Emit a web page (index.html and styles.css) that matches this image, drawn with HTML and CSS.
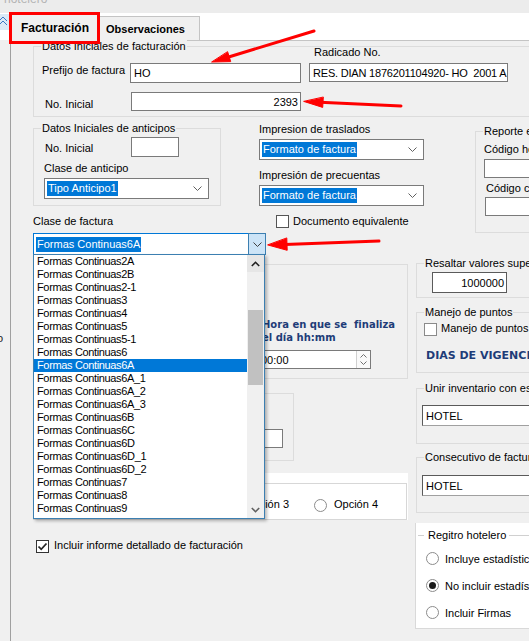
FILE: index.html
```html
<!DOCTYPE html>
<html lang="es">
<head>
<meta charset="utf-8">
<title>Facturación</title>
<link rel="stylesheet" href="styles.css">
</head>
<body>
<div class="screen">
  <div class="topbar"><span class="faded">hotelero</span></div>
  <div class="tabstrip">
    <svg class="side-icon" width="9" height="16" viewBox="0 0 9 16"><rect x="0" y="0" width="9" height="16" fill="#dbe9f6"/><path d="M-1 7 L3 3 L7 7 M-1 11 L3 7 L7 11" fill="none" stroke="#3a78c4" stroke-width="1"/></svg>
    <div class="tab tab-active">Facturación</div>
    <div class="tab tab-inactive">Observaciones</div>
  </div>
  <div class="page"></div>
  <span class="edge-o">o</span>

  <!-- Datos iniciales de facturación -->
  <div class="gb g-fact"><span class="gt">Datos Iniciales de facturación</span></div>
  <span class="lbl l-prefijo">Prefijo de factura</span>
  <div class="tb tb-prefijo">HO</div>
  <span class="lbl l-radicado">Radicado No.</span>
  <div class="tb tb-radicado">RES. DIAN 1876201104920- HO  2001 A</div>
  <span class="lbl l-noini1">No. Inicial</span>
  <div class="tb right tb-noini1">2393</div>

  <!-- Anticipos -->
  <div class="gb g-ant"><span class="gt">Datos Iniciales de anticipos</span></div>
  <span class="lbl l-noini2">No. Inicial</span>
  <div class="tb tb-noini2"></div>
  <span class="lbl l-claseant">Clase de anticipo</span>
  <div class="cb cb-ant"><span class="sel">Tipo Anticipo1</span><svg class="chev" width="9" height="5" viewBox="0 0 9 5"><path d="M0.5 0.5 L4.5 4.5 L8.5 0.5" fill="none" stroke="#606060"/></svg></div>

  <span class="lbl l-trasl">Impresion de traslados</span>
  <div class="cb cb-trasl"><span class="sel">Formato de factura</span><svg class="chev" width="9" height="5" viewBox="0 0 9 5"><path d="M0.5 0.5 L4.5 4.5 L8.5 0.5" fill="none" stroke="#606060"/></svg></div>
  <span class="lbl l-precu">Impresión de precuentas</span>
  <div class="cb cb-precu"><span class="sel">Formato de factura</span><svg class="chev" width="9" height="5" viewBox="0 0 9 5"><path d="M0.5 0.5 L4.5 4.5 L8.5 0.5" fill="none" stroke="#606060"/></svg></div>
  <span class="chk chk-doceq"></span>
  <span class="lbl l-doceq">Documento equivalente</span>

  <!-- Reporte -->
  <div class="gb g-rep"><span class="gt">Reporte estadístico</span></div>
  <span class="lbl l-codho">Código hotel</span>
  <div class="tb tb-codho"></div>
  <span class="lbl l-codci">Código ciudad</span>
  <div class="tb tb-codci"></div>

  <!-- Clase de factura -->
  <span class="lbl l-clasefac">Clase de factura</span>
  <div class="cb cb-fac"><span class="sel">Formas Continuas6A</span><span class="ddbtn"><svg width="9" height="5" viewBox="0 0 9 5"><path d="M0.5 0.5 L4.5 4.5 L8.5 0.5" fill="none" stroke="#404040"/></svg></span></div>

  <!-- groups behind the list -->
  <div class="gb g-hora"></div>
  <div class="hora-txt">Hora en que se&nbsp; finaliza<br>el día hh:mm</div>
  <div class="tb spin">00:00<span class="spin-btn"><svg width="7" height="11" viewBox="0 0 7 11"><path d="M0.5 3.5 L3.5 0.5 L6.5 3.5 M0.5 7.5 L3.5 10.5 L6.5 7.5" fill="none" stroke="#707070"/></svg></span></div>
  <div class="gb g-b2"></div>
  <div class="tb tb-b2"></div>

  <div class="opt-panel"></div>
  <div class="opt-box"></div>
  <span class="lbl opc3">Opción 3</span>
  <span class="radio r-opc4"></span>
  <span class="lbl opc4">Opción 4</span>

  <span class="chk on chk-incl"><svg width="11" height="11" viewBox="0 0 11 11"><path d="M1.5 5.5 L4.2 8.3 L9.5 2.5" fill="none" stroke="#262626" stroke-width="1.8"/></svg></span>
  <span class="lbl l-incl">Incluir informe detallado de facturación</span>

  <!-- Right column -->
  <div class="gb g-resal"><span class="gt">Resaltar valores superiores</span></div>
  <div class="tb right tb-resal">1000000</div>
  <div class="gb g-manejo"><span class="gt">Manejo de puntos</span></div>
  <span class="chk chk-manejo"></span>
  <span class="lbl l-manejo">Manejo de puntos</span>
  <span class="dias">DIAS DE VIGENCIA</span>
  <div class="gb g-unir"><span class="gt">Unir inventario con estadísticas</span></div>
  <div class="tb dark tb-unir">HOTEL</div>
  <div class="gb g-cons"><span class="gt">Consecutivo de factura</span></div>
  <div class="tb dark tb-cons">HOTEL</div>

  <div class="reg-panel">
    <div class="reg-head"><span class="reg-seg1"></span><span class="reg-title">Regitro hotelero</span><span class="reg-seg2"></span></div>
    <div class="reg-row"><span class="radio"></span><span>Incluye estadísticas</span></div>
    <div class="reg-row"><span class="radio on"></span><span>No incluir estadísticas</span></div>
    <div class="reg-row"><span class="radio"></span><span>Incluir Firmas</span></div>
  </div>

  <!-- Open drop-down list -->
  <div class="dd">
    <div class="dd-items">
      <div>Formas Continuas2A</div>
      <div>Formas Continuas2B</div>
      <div>Formas Continuas2-1</div>
      <div>Formas Continuas3</div>
      <div>Formas Continuas4</div>
      <div>Formas Continuas5</div>
      <div>Formas Continuas5-1</div>
      <div>Formas Continuas6</div>
      <div class="on">Formas Continuas6A</div>
      <div>Formas Continuas6A_1</div>
      <div>Formas Continuas6A_2</div>
      <div>Formas Continuas6A_3</div>
      <div>Formas Continuas6B</div>
      <div>Formas Continuas6C</div>
      <div>Formas Continuas6D</div>
      <div>Formas Continuas6D_1</div>
      <div>Formas Continuas6D_2</div>
      <div>Formas Continuas7</div>
      <div>Formas Continuas8</div>
      <div>Formas Continuas9</div>
    </div>
    <div class="sb">
      <span class="sb-up"><svg width="9" height="6" viewBox="0 0 9 6"><path d="M0.8 5 L4.5 1.3 L8.2 5" fill="none" stroke="#202020" stroke-width="1.6"/></svg></span>
      <span class="sb-thumb"></span>
      <span class="sb-down"><svg width="9" height="6" viewBox="0 0 9 6"><path d="M0.8 1 L4.5 4.7 L8.2 1" fill="none" stroke="#606060" stroke-width="1.6"/></svg></span>
    </div>
  </div>

  <!-- annotations -->
  <div class="red-box"></div>
  <svg class="annot" width="529" height="641" viewBox="0 0 529 641">
    <g fill="#ff0000" stroke="#ff0000" stroke-linecap="round">
      <line x1="227" y1="57.5" x2="314" y2="31" stroke-width="3"/>
      <polygon points="212,62 230.7,61.6 227.7,52" stroke-width="1"/>
      <line x1="320" y1="102.3" x2="401" y2="106" stroke-width="3"/>
      <polygon points="304,101.5 322.7,107.4 323.3,97.4" stroke-width="1"/>
      <line x1="285" y1="244.5" x2="379" y2="241" stroke-width="3"/>
      <polygon points="268,245 287.2,250.3 286.8,238.3" stroke-width="1"/>
    </g>
  </svg>
</div>
</body>
</html>
```

FILE: styles.css
```css
html, body { margin: 0; padding: 0; background: #f0f0f0; }

.screen {
  position: relative;
  width: 529px;
  height: 641px;
  overflow: hidden;
  background: #f0f0f0;
  font: 11px "Liberation Sans", Arial, sans-serif;
  color: #000;
}

.topbar { height: 13px; position: relative; overflow: hidden; background: #ececec; }
.faded { position: absolute; left: 4px; top: -8px; color: #b4b4b4; font-size: 12px; }

.tabstrip {
  position: relative;
  height: 27px;
  background: #fff;
  display: flex;
  align-items: flex-end;
}
.side-icon { position: absolute; left: 0; top: 1px; }
.tab {
  box-sizing: border-box;
  display: flex;
  align-items: center;
  font-weight: bold;
  background: #f0f0f0;
  border: 1px solid #c4c4c4;
  border-bottom: none;
  white-space: nowrap;
}
.tab-active {
  position: relative;
  z-index: 1;
  margin-left: 11px;
  width: 88px;
  height: 28px;
  margin-bottom: -1px;
  padding-left: 9px;
  font-size: 12px;
}
.tab-inactive {
  width: 101px;
  height: 24px;
  padding-left: 7px;
  border-left: none;
}

.page {
  margin-left: 10px;
  height: 600px;
  border-left: 1px solid #a0a0a0;
  border-top: 1px solid #c4c4c4;
}
.edge-o { position: absolute; left: -3px; top: 332px; color: #1a1a1a; }

/* generic controls */
.gb { position: absolute; box-sizing: border-box; border: 1px solid #dcdcdc; }
.gb .gt {
  position: absolute;
  left: 7px;
  top: -7px;
  padding: 0 1px;
  background: #f0f0f0;
  line-height: 13px;
  white-space: nowrap;
}
.lbl { position: absolute; line-height: 13px; white-space: nowrap; }
.tb {
  position: absolute;
  box-sizing: border-box;
  background: #fff;
  border: 1px solid #7a7a7a;
  padding: 0 3px;
  display: flex;
  align-items: center;
  white-space: pre;
  overflow: hidden;
}
.tb.right { justify-content: flex-end; padding-right: 2px; }
.tb.dark { border-color: #5a5a5a #a0a0a0 #a0a0a0 #5a5a5a; }
.cb {
  position: absolute;
  box-sizing: border-box;
  background: #fff;
  border: 1px solid #7a7a7a;
  display: flex;
  align-items: center;
  padding-left: 2px;
  white-space: nowrap;
}
.cb .sel { background: #0078d7; color: #fff; padding: 0 1px; line-height: 15px; }
.cb .chev { position: absolute; right: 6px; top: 7px; }

.chk {
  position: absolute;
  box-sizing: border-box;
  width: 13px;
  height: 13px;
  background: #fff;
  border: 1px solid #333;
  display: flex;
  align-items: center;
  justify-content: center;
}
.radio {
  box-sizing: border-box;
  flex-shrink: 0;
  width: 13px;
  height: 13px;
  border: 1px solid #8c8c8c;
  border-radius: 50%;
  background: #fff;
  display: inline-flex;
  align-items: center;
  justify-content: center;
}
.radio.on::after {
  content: "";
  width: 7px;
  height: 7px;
  border-radius: 50%;
  background: #1a1a1a;
}
.r-opc4 { position: absolute; left: 314px; top: 499px; }

/* Datos iniciales de facturación */
.g-fact { left: 33px; top: 46px; width: 560px; height: 71px; }
.l-prefijo { left: 42px; top: 64px; }
.tb-prefijo { left: 130px; top: 63px; width: 171px; height: 20px; }
.l-radicado { left: 314px; top: 46px; }
.tb-radicado { left: 309px; top: 63px; width: 199px; height: 19px; letter-spacing: -0.2px; }
.l-noini1 { left: 45px; top: 98px; }
.tb-noini1 { left: 131px; top: 92px; width: 170px; height: 19px; }

/* anticipos */
.g-ant { left: 33px; top: 128px; width: 188px; height: 78px; }
.l-noini2 { left: 45px; top: 142px; }
.tb-noini2 { left: 131px; top: 137px; width: 48px; height: 20px; }
.l-claseant { left: 44px; top: 162px; }
.cb-ant { left: 44px; top: 178px; width: 165px; height: 21px; }

.l-trasl { left: 259px; top: 123px; }
.cb-trasl { left: 259px; top: 139px; width: 165px; height: 21px; }
.l-precu { left: 259px; top: 169px; }
.cb-precu { left: 259px; top: 185px; width: 165px; height: 21px; }
.chk-doceq { left: 276px; top: 215px; border-color: #555; }
.l-doceq { left: 293px; top: 215px; }

/* reporte */
.g-rep { left: 475px; top: 131px; width: 100px; height: 102px; }
.l-codho { left: 484px; top: 143px; }
.tb-codho { left: 484px; top: 159px; width: 100px; height: 19px; }
.l-codci { left: 486px; top: 182px; }
.tb-codci { left: 485px; top: 197px; width: 100px; height: 19px; }

/* clase de factura */
.l-clasefac { left: 33px; top: 215px; }
.cb-fac {
  left: 33px;
  top: 233px;
  width: 233px;
  height: 22px;
  border-color: #0078d7;
}
.ddbtn {
  position: absolute;
  right: -1px;
  top: -1px;
  width: 18px;
  height: 22px;
  box-sizing: border-box;
  background: #cce4f7;
  border: 1px solid #3c7fb1;
  display: flex;
  align-items: center;
  justify-content: center;
}

/* behind list */
.g-hora { left: 240px; top: 264px; width: 168px; height: 115px; }
.hora-txt {
  position: absolute;
  left: 262px;
  top: 318px;
  font: bold 10px "DejaVu Sans", Verdana, sans-serif;
  line-height: 13px;
  color: #1e3c78;
  white-space: nowrap;
}
.spin { left: 240px; top: 350px; width: 131px; height: 19px; padding-left: 20px; }
.spin-btn {
  position: absolute;
  right: 0;
  top: 0;
  width: 14px;
  height: 17px;
  box-sizing: border-box;
  border-left: 1px solid #d0d0d0;
  background: #fafafa;
  display: flex;
  align-items: center;
  justify-content: center;
}
.g-b2 { left: 240px; top: 393px; width: 54px; height: 68px; }
.tb-b2 { left: 240px; top: 429px; width: 43px; height: 19px; }

.opt-panel { position: absolute; left: 33px; top: 473px; width: 375px; height: 47px; background: #fff; }
.opt-box { position: absolute; box-sizing: border-box; left: 33px; top: 483px; width: 374px; height: 37px; border: 1px solid #d7d7d7; background: #fff; }
.opc3 { left: 245px; top: 498px; }
.opc4 { left: 334px; top: 498px; }

.chk-incl { left: 36px; top: 540px; border-color: #333; }
.l-incl { left: 54px; top: 539px; }

/* right column */
.g-resal { left: 416px; top: 263px; width: 150px; height: 35px; }
.tb-resal { left: 432px; top: 272px; width: 75px; height: 21px; border-color: #5a5a5a; }
.g-manejo { left: 416px; top: 312px; width: 150px; height: 61px; }
.chk-manejo { left: 424px; top: 323px; border-color: #8a8a8a; }
.l-manejo { left: 441px; top: 322px; }
.dias {
  position: absolute;
  left: 426px;
  top: 349px;
  font: bold 11px "DejaVu Sans", Verdana, sans-serif;
  line-height: 13px;
  color: #1e3c78;
  white-space: nowrap;
}
.g-unir { left: 416px; top: 388px; width: 150px; height: 56px; }
.tb-unir { left: 422px; top: 405px; width: 120px; height: 21px; }
.g-cons { left: 416px; top: 457px; width: 150px; height: 56px; }
.tb-cons { left: 422px; top: 475px; width: 120px; height: 21px; }

.reg-panel {
  position: absolute;
  left: 415px;
  top: 523px;
  width: 120px;
  height: 106px;
  box-sizing: border-box;
  background: #fff;
  border-left: 1px solid #d9d9d9;
  border-bottom: 1px solid #d9d9d9;
  padding-top: 6px;
}
.reg-head { display: flex; align-items: center; height: 13px; margin-bottom: 10px; }
.reg-seg1 { flex-shrink: 0; width: 6px; height: 1px; background: #d0d0d0; margin-left: 2px; margin-right: 4px; }
.reg-title { white-space: nowrap; line-height: 13px; }
.reg-seg2 { flex: 1; height: 1px; background: #d0d0d0; margin-left: 3px; }
.reg-row {
  display: flex;
  align-items: center;
  gap: 6px;
  height: 13px;
  margin-left: 10px;
  margin-bottom: 14px;
  white-space: nowrap;
}

/* drop-down list */
.dd {
  position: absolute;
  z-index: 5;
  left: 33px;
  top: 254px;
  width: 232px;
  height: 265px;
  box-sizing: border-box;
  background: #fff;
  border: 1px solid #3c7fb1;
  box-shadow: 2px 2px 3px rgba(0, 0, 0, 0.28);
}
.dd-items { margin-right: 17px; }
.dd-items div {
  height: 13px;
  line-height: 13px;
  padding-left: 3px;
  white-space: nowrap;
  letter-spacing: -0.35px;
}
.dd-items div.on { background: #0078d7; color: #fff; }
.sb {
  position: absolute;
  right: 0;
  top: 0;
  bottom: 0;
  width: 17px;
  background: #f0f0f0;
}
.sb-up, .sb-down {
  position: absolute;
  left: 0;
  width: 17px;
  height: 17px;
  display: flex;
  align-items: center;
  justify-content: center;
}
.sb-up { top: 0; background: #e6e6e6; }
.sb-down { bottom: 0; }
.sb-thumb {
  position: absolute;
  left: 1px;
  top: 55px;
  width: 15px;
  height: 75px;
  background: #c1c1c1;
}

/* annotations */
.red-box {
  position: absolute;
  z-index: 8;
  left: 9px;
  top: 12px;
  width: 91px;
  height: 32px;
  box-sizing: border-box;
  border: 3px solid #ff0000;
}
.annot { position: absolute; left: 0; top: 0; z-index: 9; pointer-events: none; }
```
